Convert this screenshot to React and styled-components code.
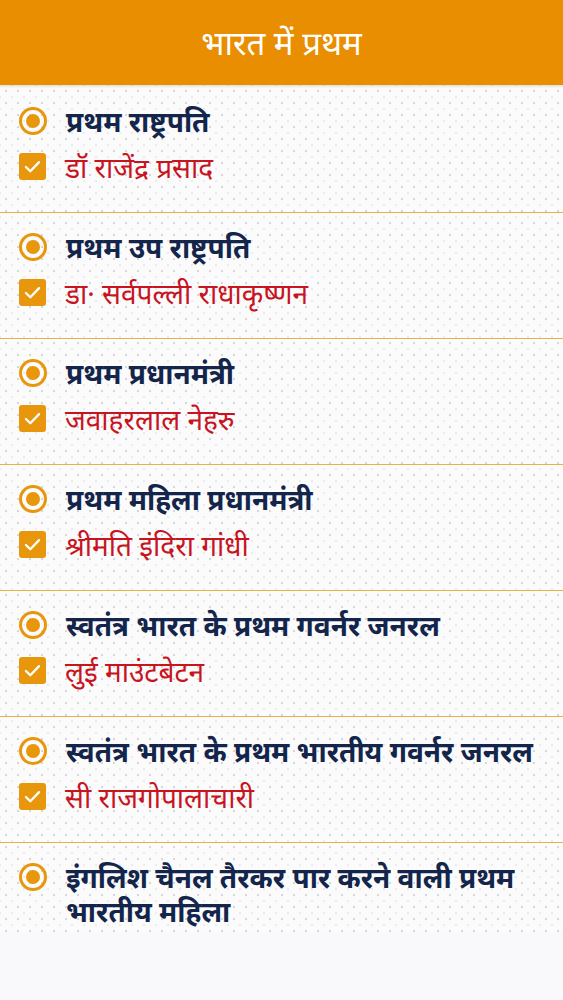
import React from "react";
import styled, { createGlobalStyle } from "styled-components";

const GlobalStyle = createGlobalStyle`
  html, body {
    margin: 0;
    padding: 0;
    background: #f9f9fb;
    font-family: "Noto Sans", "Noto Sans Devanagari", "Lohit Devanagari", sans-serif;
  }
`;

const items = [
  { q: "प्रथम राष्ट्रपति", a: "डॉ राजेंद्र प्रसाद" },
  { q: "प्रथम उप राष्ट्रपति", a: "डा· सर्वपल्ली राधाकृष्णन" },
  { q: "प्रथम प्रधानमंत्री", a: "जवाहरलाल नेहरु" },
  { q: "प्रथम महिला प्रधानमंत्री", a: "श्रीमति इंदिरा गांधी" },
  { q: "स्वतंत्र भारत के प्रथम गवर्नर जनरल", a: "लुई माउंटबेटन" },
  { q: "स्वतंत्र भारत के प्रथम भारतीय गवर्नर जनरल", a: "सी राजगोपालाचारी" },
  { q: "इंगलिश चैनल तैरकर पार करने वाली प्रथम भारतीय महिला" },
];

const Page = () => {
  return (
    <>
      <GlobalStyle />
      <Header>भारत में प्रथम</Header>
      <List>
        {items.map((item, index) => (
          <Item key={index} last={index === items.length - 1}>
            <Row>
              <Radio />
              <Question>{item.q}</Question>
            </Row>
            {item.a && (
              <Row>
                <Check>
                  <svg width="21" height="21" viewBox="0 0 24 24">
                    <path
                      d="M4.5 12.5l5 5L19.5 7"
                      fill="none"
                      stroke="#fff"
                      strokeWidth="2.6"
                      strokeLinecap="round"
                      strokeLinejoin="round"
                    />
                  </svg>
                </Check>
                <Answer>{item.a}</Answer>
              </Row>
            )}
          </Item>
        ))}
      </List>
    </>
  );
};

const Header = styled.div`
  height: 85px;
  background: #e88e00;
  color: #fff;
  font-size: 33px;
  display: flex;
  align-items: center;
  justify-content: center;
  box-shadow: 0 1px 3px rgba(0, 0, 0, 0.15);
  position: relative;
`;

const List = styled.div`
  padding-top: 2px;
  background-color: #fbfbfc;
  background-image: radial-gradient(#d6d6dc 1px, transparent 1.4px),
    radial-gradient(#ebebef 0.8px, transparent 1.2px);
  background-size: 12px 12px;
  background-position: 0 0, 6px 6px;
`;

const Item = styled.div`
  box-sizing: border-box;
  min-height: ${(props) => (props.last ? "78px" : "126px")};
  padding: 17px 20px 4px 19px;
  display: flex;
  flex-direction: column;
  gap: 12px;
  border-bottom: ${(props) => (props.last ? "none" : "1.5px solid #eab04a")};
`;

const Row = styled.div`
  display: flex;
  align-items: flex-start;
  gap: 19px;
`;

const Radio = styled.div`
  flex: none;
  box-sizing: border-box;
  width: 28px;
  height: 28px;
  margin-top: 3px;
  border-radius: 50%;
  border: 3px solid #e8960c;
  display: flex;
  align-items: center;
  justify-content: center;
  &::after {
    content: "";
    width: 14px;
    height: 14px;
    border-radius: 50%;
    background: #e8960c;
  }
`;

const Check = styled.div`
  flex: none;
  width: 27px;
  height: 27px;
  margin-top: 3px;
  border-radius: 3px;
  background: #e8960c;
  display: flex;
  align-items: center;
  justify-content: center;
`;

const Question = styled.div`
  font-size: 28px;
  font-weight: bold;
  color: #13254b;
  line-height: 34px;
`;

const Answer = styled.div`
  font-size: 28px;
  color: #c8141e;
  line-height: 34px;
`;

export default Page;
